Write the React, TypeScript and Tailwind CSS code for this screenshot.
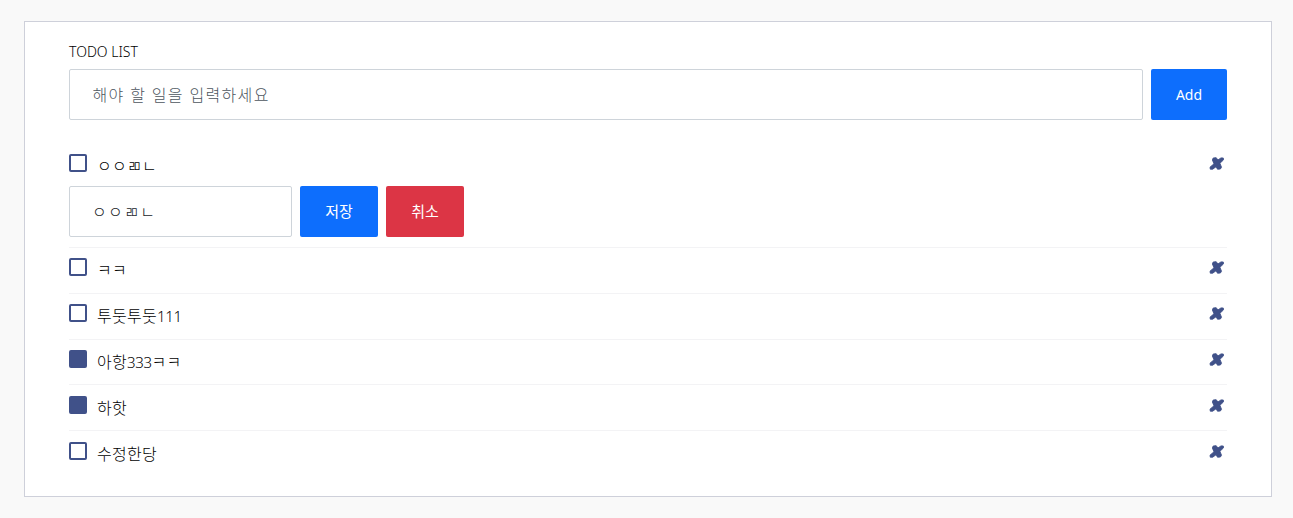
import { useState } from "react";

type Todo = { id: number; text: string; done: boolean; editing?: boolean };

const initialTodos: Todo[] = [
  { id: 1, text: "ㅇㅇㄻㄴ", done: false, editing: true },
  { id: 2, text: "ㅋㅋ", done: false },
  { id: 3, text: "투둣투둣111", done: false },
  { id: 4, text: "아항333ㅋㅋ", done: true },
  { id: 5, text: "하핫", done: true },
  { id: 6, text: "수정한당", done: false },
];

function RemoveIcon() {
  return (
    <svg width="15" height="13" viewBox="0 0 15 13" fill="#405189" stroke="#405189" strokeWidth="0.9" strokeLinejoin="round">
      <path d="M4.2 1 7.2 .7 8.9 3 12 .9 14.3 1 14.4 3 10.9 6.3 12.5 10.2 11.4 12 8.5 12.2 7.1 9.7 3.7 12.2 1.3 12.2 1 10.2 5 6.8 3.4 3Z" />
    </svg>
  );
}

// Digits are set slightly tighter than the Hangul around them.
function Label({ text }: { text: string }) {
  return (
    <span className="ml-[10px] pt-px text-[16px] leading-[22px] font-light tracking-[0.3px] text-black">
      {text.split(/(\d+)/).map((part, i) =>
        /^\d+$/.test(part) ? (
          <span key={i} className="text-[15px] tracking-[-0.4px]">{part}</span>
        ) : (
          part
        ),
      )}
    </span>
  );
}

function TodoRow({ todo, onToggle, onRemove }: { todo: Todo; onToggle: () => void; onRemove: () => void }) {
  return (
    <li className={`border-b border-[#f3f3f5] pt-[10.4px] last:border-b-0 ${todo.editing ? "h-[104px]" : "h-[45.8px]"}`}>
      <div className="flex h-[31.6px] items-start">
        <button
          aria-label="toggle"
          onClick={onToggle}
          className={`size-[18px] shrink-0 rounded-[2px] border-2 border-[#405189] ${todo.done ? "bg-[#405189]" : "bg-white"}`}
        />
        <Label text={todo.text} />
        <button aria-label="remove" onClick={onRemove} className="mt-[3px] mr-[3px] ml-auto">
          <RemoveIcon />
        </button>
      </div>
      {todo.editing && (
        <div className="flex gap-2">
          <input
            defaultValue={todo.text}
            className="h-[51px] w-[223px] rounded-[2px] border border-[#ced4da] pr-[22px] pb-px pl-[22px] text-[16px] font-light tracking-[1.4px] text-[#212529] outline-none"
          />
          <button className="h-[51px] w-[78px] rounded-[2px] bg-[#0d6efd] pb-px text-[15px] text-white">저장</button>
          <button className="h-[51px] w-[78px] rounded-[2px] bg-[#dc3545] pb-px text-[15px] text-white">취소</button>
        </div>
      )}
    </li>
  );
}

export default function App() {
  const [todos, setTodos] = useState(initialTodos);
  return (
    <main className="h-[518px] bg-[#f9f9f9] pt-[21px] pr-[21px] pl-6 font-['Noto_Sans','Noto_Sans_CJK_KR',sans-serif]">
      <section className="h-[476px] border border-[#ced0da] bg-white px-[44px] pt-5">
        <h1 className="h-[27px] pt-px text-[14px] leading-[18px] font-light text-black">TODO LIST</h1>
        <div className="flex gap-2">
          <input
            placeholder="해야 할 일을 입력하세요"
            className="h-[51px] min-w-0 flex-1 rounded-[2px] border border-[#ced4da] pt-px pr-[22px] pl-[22.5px] text-[16px] font-light tracking-[1.35px] outline-none placeholder:text-[#4d565e]"
          />
          <button className="h-[51px] w-[76px] rounded-[2px] bg-[#0d6efd] text-[14px] text-white">Add</button>
        </div>
        <ul className="mt-6">
          {todos.map((todo) => (
            <TodoRow
              key={todo.id}
              todo={todo}
              onToggle={() => setTodos(todos.map((t) => (t.id === todo.id ? { ...t, done: !t.done } : t)))}
              onRemove={() => setTodos(todos.filter((t) => t.id !== todo.id))}
            />
          ))}
        </ul>
      </section>
    </main>
  );
}
